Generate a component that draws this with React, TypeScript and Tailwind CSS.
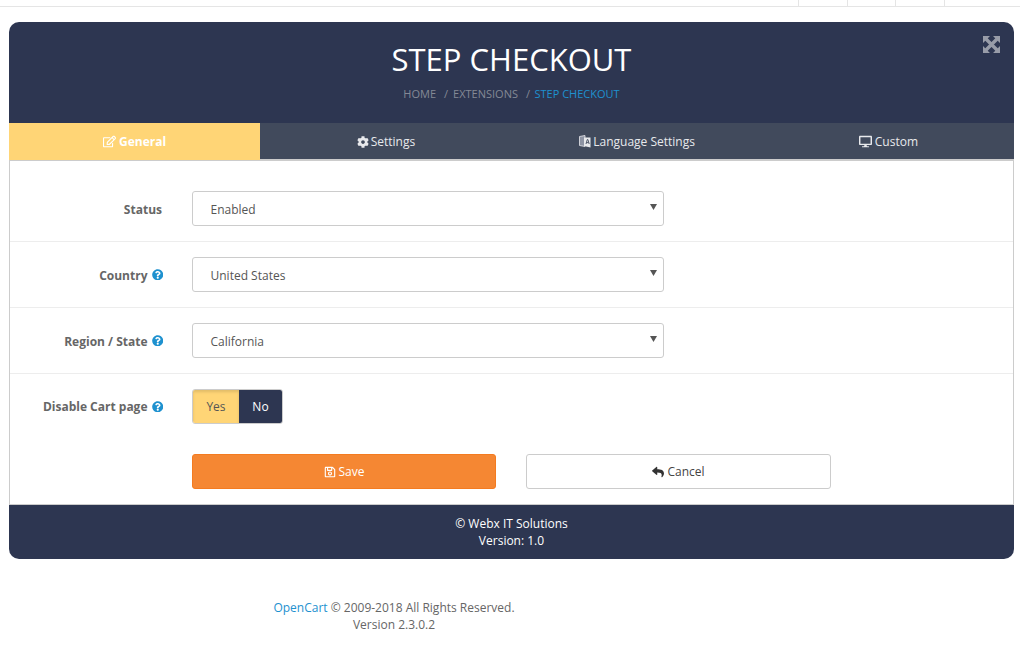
import React from "react";
import { FaRegEdit, FaCog, FaDesktop, FaQuestionCircle, FaRegSave, FaReply } from "react-icons/fa";

const Help = () => <FaQuestionCircle className="text-[11.5px] text-[#1e91cf] ml-[4px] shrink-0" />;

function ExpandIcon() {
  return (
    <svg width="17" height="17" viewBox="0 0 17 17" className="absolute top-[14px] right-[14px]" fill="#989ca8">
      <path d="M0 0h7L0 7zM17 0v7L10 0zM0 17v-7l7 7zM17 17h-7l7-7z" />
      <path d="M3 3l11 11M14 3L3 14" stroke="#989ca8" strokeWidth="3.4" />
    </svg>
  );
}

function LanguageBookIcon() {
  return (
    <svg width="12" height="13" viewBox="0 0 12 13">
      <path d="M0.5 1.5L6 0.5V11.5L0.5 10.5z" fill="#8d93a3" stroke="#e8e9ec" strokeWidth="0.8" />
      <path d="M5 2.5H11.5V12.5L5 11z" fill="#e8e9ec" />
      <path d="M7 9l1.3-4.5h0.6L10.2 9M7.6 7.6h2" fill="none" stroke="#414a5c" strokeWidth="0.9" />
    </svg>
  );
}

function Select({ value }: { value: string }) {
  return (
    <div className="w-[472px] h-[35px] border border-[#ccc] rounded-[3px] bg-white flex items-center justify-between pl-[17.5px] pr-[6px] text-[12px] text-[#555]">
      <span className="pt-[2px]">{value}</span>
      <svg width="7" height="6" viewBox="0 0 7 6" className="mb-[3px]"><path d="M0 0h7L3.5 6z" fill="#555" /></svg>
    </div>
  );
}

function Row({ label, help, value }: { label: string; help?: boolean; value: string }) {
  return (
    <div className="flex items-center py-[15px] border-b border-[#ededed]">
      <div className={`w-[153px] flex items-center justify-end text-[12px] font-bold text-[#666] ${help ? "" : "pr-[1px]"}`}>
        <span className="pt-[2px]">{label}</span>
        {help && <Help />}
      </div>
      <div className="ml-[29px]"><Select value={value} /></div>
    </div>
  );
}

export default function App() {
  return (
    <div className="w-[1020px] h-[664px] bg-white overflow-hidden font-['Open_Sans',sans-serif] text-[12px]">
      <div className="h-[7px] border-b border-[#e5e5e5] flex justify-end">
        <div className="w-[49px] border-l border-[#e5e5e5]" />
        <div className="w-[48px] border-l border-[#e5e5e5]" />
        <div className="w-[49px] border-l border-[#e5e5e5]" />
        <div className="w-[76px] border-l border-[#e5e5e5]" />
      </div>

      <div className="mt-[15px] ml-[9px] w-[1005px] h-[537px] rounded-[10px] overflow-hidden flex flex-col">
        <div className="relative h-[101px] bg-[#2d3651] flex flex-col items-center shrink-0">
          <h1 className="mt-[18px] text-[31px] leading-[38px] text-white">STEP CHECKOUT</h1>
          <div className="mt-[8px] text-[11px] leading-[16px] text-[#848995] flex">
            <span>HOME</span>
            <span className="ml-[8px]">/</span>
            <span className="ml-[5px]">EXTENSIONS</span>
            <span className="ml-[8px]">/</span>
            <span className="ml-[4.5px] text-[#1e91cf]">STEP CHECKOUT</span>
          </div>
          <ExpandIcon />
        </div>

        <div className="grid grid-cols-4 h-[38px] bg-[#414a5c] text-white text-[12px] shrink-0 border-b-[2px] border-[#ccc]">
          <div className="bg-[#ffd576] font-bold flex items-center justify-center gap-[3px] h-[37px]"><FaRegEdit className="text-[13px]" /><span>General</span></div>
          <div className="flex items-center justify-center gap-[2px] h-[37px] text-[#e8e9ec]"><FaCog className="text-[12px]" /><span>Settings</span></div>
          <div className="flex items-center justify-center gap-[2px] h-[37px] text-[#e8e9ec]"><LanguageBookIcon /><span>Language Settings</span></div>
          <div className="flex items-center justify-center gap-[3px] h-[37px] text-[#e8e9ec]"><FaDesktop className="text-[13px]" /><span>Custom</span></div>
        </div>

        <div className="flex-1 bg-white border-x border-[#ccc] flex flex-col pt-[15px]">
          <Row label="Status" value="Enabled" />
          <Row label="Country" help value="United States" />
          <Row label="Region / State" help value="California" />
          <div className="flex items-center pt-[15px]">
            <div className="w-[153px] flex items-center justify-end text-[12px] font-bold text-[#666]">
              <span>Disable Cart page</span>
              <Help />
            </div>
            <div className="ml-[29px] flex h-[35px] w-[91px] border border-[#ccc] rounded-[3px] overflow-hidden text-[12px]">
              <div className="w-[46px] bg-[#ffd576] text-[#555] flex items-center justify-center shadow-[inset_0_2px_3px_rgba(0,0,0,0.12)]">Yes</div>
              <div className="flex-1 bg-[#2d3651] text-white font-medium flex items-center justify-center">No</div>
            </div>
          </div>
          <div className="flex mt-[30px] ml-[182px]">
            <div className="w-[304px] h-[35px] rounded-[3px] bg-[#f58733] border border-[#f47b20] text-white flex items-center justify-center gap-[3px]">
              <FaRegSave className="text-[12px]" /><span>Save</span>
            </div>
            <div className="ml-[30px] w-[305px] h-[35px] rounded-[3px] bg-white border border-[#ccc] text-[#444] flex items-center justify-center gap-[3px]">
              <FaReply className="text-[12px] text-[#333]" /><span>Cancel</span>
            </div>
          </div>
        </div>

        <div className="h-[55px] bg-[#2d3651] border-t border-[#ccc] text-white text-[12px] leading-[17px] font-medium flex flex-col items-center justify-center shrink-0">
          <span>© Webx IT Solutions</span>
          <span>Version: 1.0</span>
        </div>
      </div>

      <div className="mt-[40px] w-[788px] text-center text-[12px] leading-[17px] text-[#666]">
        <a className="text-[#1e91cf]">OpenCart</a> © 2009-2018 All Rights Reserved.<br />Version 2.3.0.2
      </div>
    </div>
  );
}
